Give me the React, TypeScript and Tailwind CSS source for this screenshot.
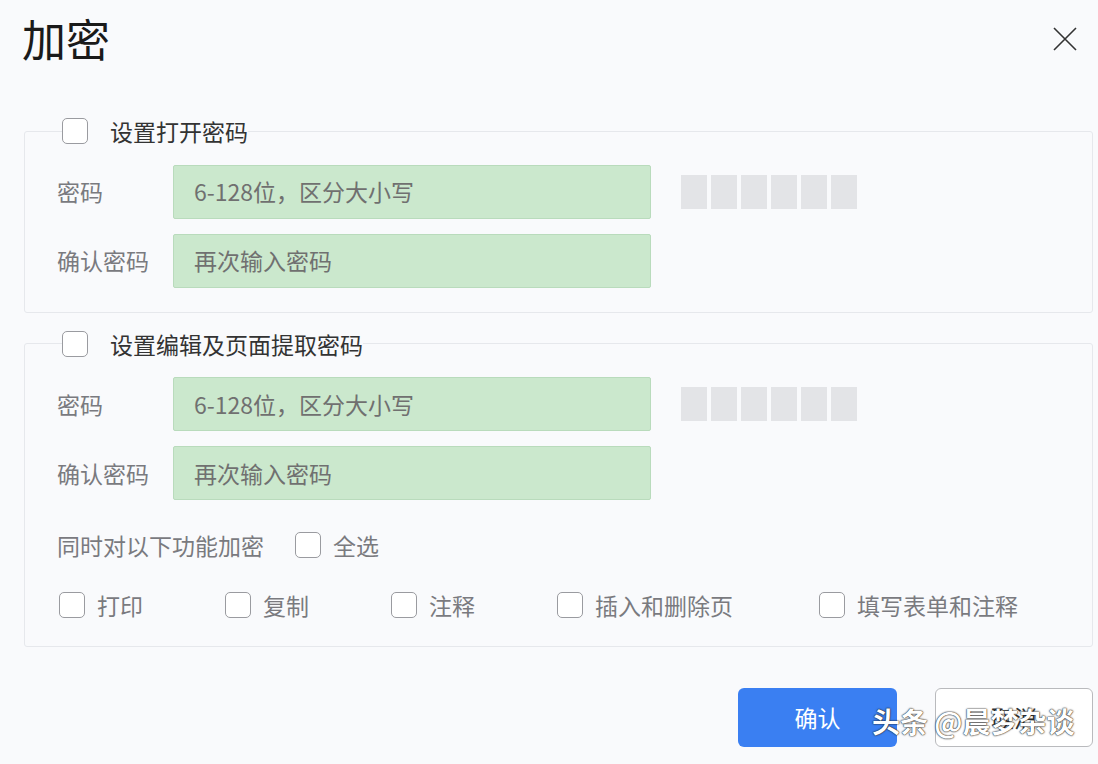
import React from "react";

const FONT = "font-['Microsoft_YaHei','Noto_Sans_CJK_SC',sans-serif]";

function Box({ className = "" }: { className?: string }) {
  return (
    <span
      className={
        "inline-block w-[26px] h-[26px] shrink-0 rounded-[5px] border border-[#9a9ba0] bg-white " +
        className
      }
    />
  );
}

function Strength() {
  return (
    <div className="flex gap-[4px] ml-[30px]">
      {[0, 1, 2, 3, 4, 5].map((i) => (
        <span key={i} className="w-[26px] h-[34px] bg-[#e3e4e7]" />
      ))}
    </div>
  );
}

function Field({
  label,
  placeholder,
  meter,
}: {
  label: string;
  placeholder: string;
  meter?: boolean;
}) {
  return (
    <div className="flex items-center">
      <label className="w-[116px] shrink-0 text-[23px] text-[#7a7a7f]">{label}</label>
      <div className="w-[478px] h-[54px] flex items-center pl-[20px] bg-[#cbe8cd] border border-[#b9dbbc] rounded-[2px] text-[23px] text-[#707070]">
        {placeholder}
      </div>
      {meter && <Strength />}
    </div>
  );
}

function Section({
  title,
  children,
  className = "",
}: {
  title: string;
  children: React.ReactNode;
  className?: string;
}) {
  return (
    <fieldset
      className={
        "border border-[#e6e8ec] rounded-[3px] pl-[32px] pr-[20px] " + className
      }
    >
      <legend className="flex items-center gap-[22px] ml-[5px] px-[0px] text-[23px] text-[#333]">
        <Box />
        <span>{title}</span>
      </legend>
      {children}
    </fieldset>
  );
}

export default function App() {
  const opts = [
    { t: "打印", w: "w-[166px]" },
    { t: "复制", w: "w-[166px]" },
    { t: "注释", w: "w-[166px]" },
    { t: "插入和删除页", w: "w-[262px]" },
    { t: "填写表单和注释", w: "" },
  ];
  return (
    <div className={"relative w-[1098px] h-[764px] overflow-hidden bg-[#f9fafc] pl-[24px] pr-[5px] " + FONT}>
      <div className="flex items-start justify-between h-[80px]">
        <h1 className="pt-[16px] text-[44px] leading-none text-[#1a1a1a] -ml-[2px]">加密</h1>
        <svg width="26" height="26" viewBox="0 0 26 26" className="mt-[26px] mr-[15px]">
          <path d="M2 2 L24 24 M24 2 L2 24" stroke="#333" strokeWidth="1.6" />
        </svg>
      </div>

      <Section title="设置打开密码" className="mt-[34px] pb-[24px]">
        <div className="flex flex-col gap-[15px] pt-[16px]">
          <Field label="密码" placeholder="6-128位，区分大小写" meter />
          <Field label="确认密码" placeholder="再次输入密码" />
        </div>
      </Section>

      <Section title="设置编辑及页面提取密码" className="mt-[14px] pb-[24px]">
        <div className="flex flex-col gap-[15px] pt-[16px]">
          <Field label="密码" placeholder="6-128位，区分大小写" meter />
          <Field label="确认密码" placeholder="再次输入密码" />
        </div>
        <div className="flex items-center mt-[28px] text-[23px] text-[#7a7a7f]">
          <span>同时对以下功能加密</span>
          <Box className="ml-[31px]" />
          <span className="ml-[12px]">全选</span>
        </div>
        <div className="flex items-center mt-[25px] text-[23px] text-[#7a7a7f] ml-[2px]">
          {opts.map((o) => (
            <div key={o.t} className={"flex items-center gap-[12px] " + o.w}>
              <Box />
              <span>{o.t}</span>
            </div>
          ))}
        </div>
      </Section>

      <div className="flex justify-end gap-[38px] mt-[41px]">
        <button className="w-[159px] h-[59px] rounded-[6px] bg-[#3a7ff2] text-white text-[23px]">
          确认
        </button>
        <button className="w-[158px] h-[59px] rounded-[6px] border border-[#b9babd] bg-white text-[23px] text-[#333]">
          取消
        </button>
      </div>

      <div className="absolute left-[872px] top-[700px] text-[28px] text-white font-bold [text-shadow:0_0_2px_#222,0_0_1px_#000]">
        头条 @晨梦杂谈
      </div>
    </div>
  );
}
